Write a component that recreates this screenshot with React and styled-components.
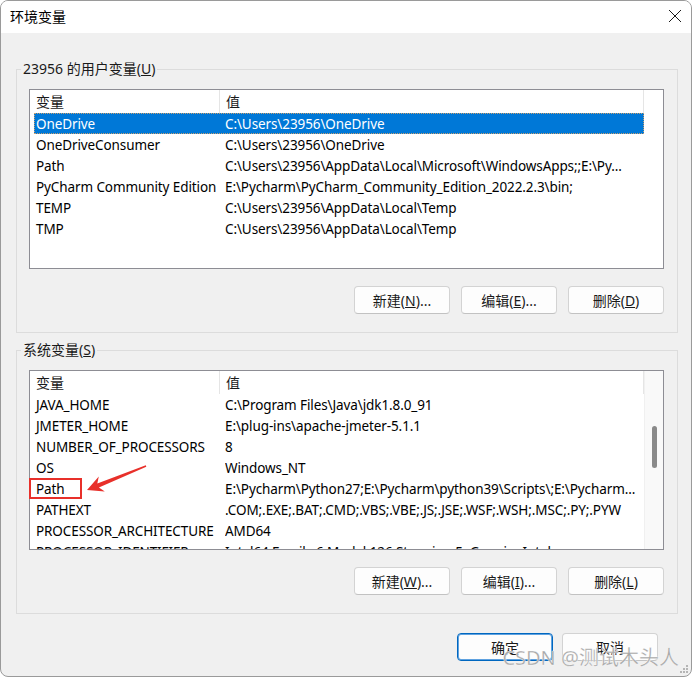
import React from 'react';
import styled, { createGlobalStyle } from 'styled-components';

const UI_FONT = '"Noto Sans", "Noto Sans CJK SC", sans-serif';

const userVars = [
  ['OneDrive', 'C:\\Users\\23956\\OneDrive'],
  ['OneDriveConsumer', 'C:\\Users\\23956\\OneDrive'],
  ['Path', 'C:\\Users\\23956\\AppData\\Local\\Microsoft\\WindowsApps;;E:\\Py...'],
  ['PyCharm Community Edition', 'E:\\Pycharm\\PyCharm_Community_Edition_2022.2.3\\bin;'],
  ['TEMP', 'C:\\Users\\23956\\AppData\\Local\\Temp'],
  ['TMP', 'C:\\Users\\23956\\AppData\\Local\\Temp'],
];

const systemVars = [
  ['JAVA_HOME', 'C:\\Program Files\\Java\\jdk1.8.0_91'],
  ['JMETER_HOME', 'E:\\plug-ins\\apache-jmeter-5.1.1'],
  ['NUMBER_OF_PROCESSORS', '8'],
  ['OS', 'Windows_NT'],
  ['Path', 'E:\\Pycharm\\Python27;E:\\Pycharm\\python39\\Scripts\\;E:\\Pycharm...'],
  ['PATHEXT', '.COM;.EXE;.BAT;.CMD;.VBS;.VBE;.JS;.JSE;.WSF;.WSH;.MSC;.PY;.PYW'],
  ['PROCESSOR_ARCHITECTURE', 'AMD64'],
  ['PROCESSOR_IDENTIFIER', 'Intel64 Family 6 Model 126 Stepping 5, GenuineIntel'],
];

export default function App() {
  return (
    <>
      <GlobalStyle />
      <Window>
        <TitleBar>
          <Title>环境变量</Title>
          <CloseIcon width="14" height="14" viewBox="0 0 14 14">
            <path d="M1 1 L13 13 M13 1 L1 13" stroke="#1a1a1a" strokeWidth="1" fill="none" />
          </CloseIcon>
        </TitleBar>

        <Content>
          <Group>
            <Legend>23956 的用户变量(<u>U</u>)</Legend>
            <VarList vars={userVars} selected={0} />
            <ButtonRow>
              <Button>新建(<u>N</u>)...</Button>
              <Button>编辑(<u>E</u>)...</Button>
              <Button>删除(<u>D</u>)</Button>
            </ButtonRow>
          </Group>

          <Group $second>
            <Legend>系统变量(<u>S</u>)</Legend>
            <VarList vars={systemVars} scroll />
            <ButtonRow>
              <Button>新建(<u>W</u>)...</Button>
              <Button>编辑(<u>I</u>)...</Button>
              <Button>删除(<u>L</u>)</Button>
            </ButtonRow>
          </Group>

          <Footer>
            <Button $primary>确定</Button>
            <Button>取消</Button>
          </Footer>
        </Content>

        {/* red markup drawn over the screenshot */}
        <Annotation width="692" height="677" viewBox="0 0 692 677">
          <rect x="30" y="479" width="51" height="19" fill="none" stroke="#e8302a" strokeWidth="2" />
          <polygon
            points="145.8,465.3 97.3,483.5 98.8,476.6 87,490 104.8,491.4 98.9,487.5 146.3,466.7"
            fill="#e8302a"
          />
        </Annotation>

        <Watermark>CSDN @测试木头人</Watermark>
        <Grip width="10" height="10" viewBox="0 0 10 10">
          <rect x="7" y="1" width="2" height="2" fill="#b5b5b5" />
          <rect x="4" y="4" width="2" height="2" fill="#b5b5b5" />
          <rect x="7" y="4" width="2" height="2" fill="#b5b5b5" />
          <rect x="1" y="7" width="2" height="2" fill="#b5b5b5" />
          <rect x="4" y="7" width="2" height="2" fill="#b5b5b5" />
          <rect x="7" y="7" width="2" height="2" fill="#b5b5b5" />
        </Grip>
      </Window>
    </>
  );
}

function VarList({ vars, selected, scroll }) {
  return (
    <ListBox>
      <ListMain>
        <Header>
          <HeaderCell $w={190}>变量</HeaderCell>
          <HeaderCell $w={424}>值</HeaderCell>
        </Header>
        <Rows>
          {vars.map(([name, value], i) => (
            <Row key={name} $selected={i === selected}>
              <NameCell>{name}</NameCell>
              <ValueCell>{value}</ValueCell>
            </Row>
          ))}
        </Rows>
      </ListMain>
      <ScrollTrack $active={scroll}>
        {scroll && <Thumb />}
      </ScrollTrack>
    </ListBox>
  );
}

const GlobalStyle = createGlobalStyle`
  html, body {
    margin: 0;
    padding: 0;
    background: #ffffff;
  }
  body {
    font-family: ${UI_FONT};
  }
`;

const Window = styled.div`
  position: relative;
  width: 692px;
  height: 677px;
  box-sizing: border-box;
  border: 1px solid #9a9a9a;
  border-radius: 8px;
  overflow: hidden;
  display: flex;
  flex-direction: column;
  background: #f0f0f0;
  font-family: ${UI_FONT};
  color: #000;
`;

const TitleBar = styled.div`
  height: 32px;
  flex: none;
  background: #ffffff;
  display: flex;
  align-items: center;
  justify-content: space-between;
  padding: 0 9px 0 9px;
`;

const Title = styled.div`
  font-size: 14px;
  margin-top: -3px;
`;

const CloseIcon = styled.svg`
  margin-top: -2px;
`;

const Content = styled.div`
  flex: 1;
  display: flex;
  flex-direction: column;
  padding: 27px 13px 0 15px;
`;

const Group = styled.fieldset`
  margin: ${p => (p.$second ? '8px' : '0')} 0 0 0;
  padding: 11px 13px 18px 12px;
  border: 1px solid #dcdcdc;
  min-width: 0;
  display: flex;
  flex-direction: column;
`;

const Legend = styled.legend`
  font-size: 14px;
  line-height: 18px;
  padding: 0 2px;
  margin-left: -8px;
  color: #1a1a1a;
`;

const ListBox = styled.div`
  height: 180px;
  box-sizing: border-box;
  border: 1px solid #8d8d94;
  background: #ffffff;
  display: flex;
  overflow: hidden;
`;

const ListMain = styled.div`
  width: 614px;
  flex: none;
  display: flex;
  flex-direction: column;
  overflow: hidden;
`;

const Header = styled.div`
  height: 23px;
  flex: none;
  display: flex;
`;

const HeaderCell = styled.div`
  width: ${p => p.$w}px;
  flex: none;
  box-sizing: border-box;
  border-right: 1px solid #e5e5e5;
  padding-left: 6px;
  font-size: 14px;
  line-height: 23px;
  color: #1a1a1a;
`;

const Rows = styled.div`
  padding-left: 4px;
  display: flex;
  flex-direction: column;
`;

const Row = styled.div`
  height: 21px;
  flex: none;
  display: flex;
  align-items: center;
  box-sizing: border-box;
  white-space: nowrap;
  font-size: 13.5px;
  letter-spacing: -0.1px;
  background: ${p => (p.$selected ? '#0078d7' : 'transparent')};
  color: ${p => (p.$selected ? '#ffffff' : '#000000')};
  outline: ${p => (p.$selected ? '1px dotted #c8a070' : 'none')};
  outline-offset: -1px;
`;

const NameCell = styled.div`
  width: 191px;
  flex: none;
  padding-left: 2px;
  box-sizing: border-box;
  overflow: hidden;
`;

const ValueCell = styled.div`
  flex: 1;
  overflow: hidden;
`;

const ScrollTrack = styled.div`
  flex: 1;
  position: relative;
  background: ${p => (p.$active ? '#f9f9f9' : '#ffffff')};
  border-left: 1px solid ${p => (p.$active ? '#f0f0f0' : '#ffffff')};
`;

const Thumb = styled.div`
  position: absolute;
  left: 7px;
  top: 55px;
  width: 5px;
  height: 42px;
  border-radius: 3px;
  background: #8a8a8a;
`;

const ButtonRow = styled.div`
  display: flex;
  justify-content: flex-end;
  gap: 11px;
  margin-top: 17px;
`;

const Button = styled.button`
  width: 96px;
  height: 28px;
  box-sizing: border-box;
  border: ${p => (p.$primary ? '1px solid #0067c0' : '1px solid #d3d3d3')};
  border-bottom-color: ${p => (p.$primary ? '#0067c0' : '#c2c2c2')};
  box-shadow: ${p => (p.$primary ? 'inset 0 0 0 1px #5fa2e0' : 'none')};
  border-radius: 4px;
  background: #fdfdfd;
  font-family: ${UI_FONT};
  font-size: 14px;
  color: #1a1a1a;
  padding: 0;
`;

const Footer = styled.div`
  display: flex;
  justify-content: flex-end;
  gap: 9px;
  margin-top: 19px;
  padding-right: 20px;
`;

const Annotation = styled.svg`
  position: absolute;
  left: -1px;
  top: -1px;
  pointer-events: none;
`;

const Watermark = styled.div`
  position: absolute;
  right: 12px;
  bottom: 6px;
  font-family: ${UI_FONT};
  font-size: 20px;
  line-height: 24px;
  color: rgba(140, 140, 140, 0.75);
  -webkit-text-stroke: 0.4px rgba(255, 255, 255, 0.6);
  text-shadow: 0 0 1px #ffffff;
  pointer-events: none;
`;

const Grip = styled.svg`
  position: absolute;
  right: 2px;
  bottom: 2px;
`;
